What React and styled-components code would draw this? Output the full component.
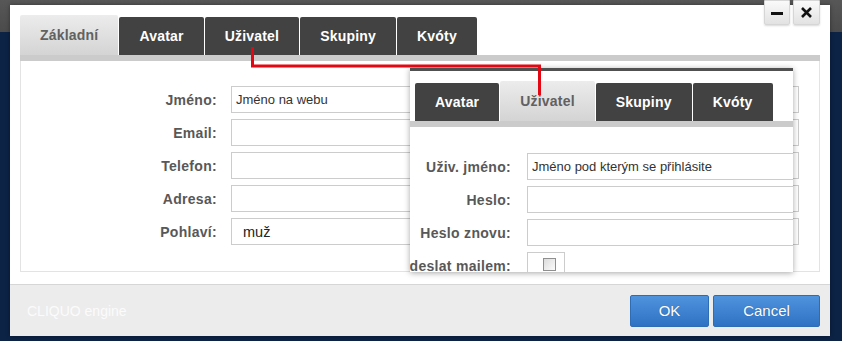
import React from 'react';
import styled, { createGlobalStyle, css } from 'styled-components';

const GlobalStyle = createGlobalStyle`
  html, body {
    margin: 0;
    padding: 0;
  }
  body {
    width: 842px;
    height: 341px;
    overflow: hidden;
    font-family: "Liberation Sans", Arial, sans-serif;
    background: linear-gradient(#575757 0, #4b4b4b 32px, #0c2346 32px);
  }
`;

const Page = styled.div`
  padding: 5px 0 0 10px;
`;

const Dialog = styled.div`
  position: relative;
  width: 820px;
  height: 331px;
  background: #ffffff;
  box-shadow: 0 0 4px rgba(0, 0, 0, 0.4);
  display: flex;
  flex-direction: column;
`;

const WindowButtons = styled.div`
  position: absolute;
  top: -5px;
  right: 10px;
  display: flex;
  gap: 3px;
`;

const WinButton = styled.button`
  width: ${p => p.w || 26}px;
  height: 25px;
  padding: 0;
  border: 1px solid #d6d6d6;
  border-radius: 0 0 2px 2px;
  background: linear-gradient(#fafafa, #e2e2e2);
  display: flex;
  align-items: center;
  justify-content: center;
  box-shadow: 0 1px 2px rgba(0, 0, 0, 0.15);

  svg {
    display: block;
  }
`;

const Body = styled.div`
  padding: 10px 10px 12px;
`;

const TabRow = styled.div`
  display: flex;
  align-items: flex-end;
  gap: 1px;
  height: 40px;
  padding-left: ${p => p.inset || 0}px;
  border-bottom: 6px solid #cbcbcb;
`;

const Tab = styled.div`
  height: 38px;
  padding: 0 20px;
  display: flex;
  align-items: center;
  font-size: 14px;
  font-weight: bold;
  letter-spacing: 0.2px;
  color: #ffffff;
  background: #424242;
  border-radius: 2px 2px 0 0;

  ${p => p.active && css`
    height: 40px;
    color: #616161;
    background: linear-gradient(#ececec, #d4d4d4);
  `}
`;

const Panel = styled.div`
  height: 211px;
  box-sizing: border-box;
  padding-top: 25px;
  border: 1px solid #e3e3e3;
  border-top: none;
`;

const Row = styled.div`
  display: flex;
  align-items: center;
  height: 27px;
  margin-bottom: 6px;
`;

const Label = styled.label`
  flex: none;
  width: ${p => p.w}px;
  margin-right: ${p => p.gap}px;
  display: flex;
  justify-content: flex-end;
  white-space: nowrap;
  font-size: 14px;
  font-weight: bold;
  letter-spacing: 0.3px;
  color: #585858;
`;

const Input = styled.input`
  flex: none;
  width: ${p => p.w}px;
  height: 27px;
  box-sizing: border-box;
  margin: 0;
  padding: 0 4px;
  border: 1px solid #cccccc;
  font-family: "Liberation Sans", Arial, sans-serif;
  font-size: 13px;
  color: #333333;
  background: #ffffff;
  outline: none;
`;

const SelectBox = styled.div`
  flex: none;
  width: ${p => p.w}px;
  height: 27px;
  box-sizing: border-box;
  padding-left: 11px;
  border: 1px solid #cccccc;
  display: flex;
  align-items: center;
  font-size: 14.5px;
  color: #222222;
`;

const CheckCell = styled.div`
  flex: none;
  align-self: flex-start;
  width: 38px;
  height: 27px;
  box-sizing: border-box;
  border: 1px solid #cccccc;
  padding: 5px 0 0 15px;
`;

const CheckBox = styled.span`
  display: block;
  width: 11px;
  height: 11px;
  border: 1px solid #8f8f8f;
  background: linear-gradient(135deg, #dcdcdc, #fbfbfb);
`;

const Footer = styled.div`
  flex: 1;
  display: flex;
  align-items: center;
  justify-content: space-between;
  padding: 0 10px 0 17px;
  border-top: 1px solid #d6d6d6;
  background: #ececec;
`;

const Brand = styled.span`
  font-size: 14px;
  color: #fbfbfb;
`;

const Actions = styled.div`
  display: flex;
  gap: 4px;
`;

const ActionButton = styled.button`
  width: ${p => p.w}px;
  height: 32px;
  border: 1px solid #2e6cb5;
  border-radius: 2px;
  background: linear-gradient(#4f93dd, #2f72c4);
  font-family: "Liberation Sans", Arial, sans-serif;
  font-size: 15px;
  color: #ffffff;
  text-shadow: 0 0 1px rgba(0, 0, 0, 0.35);
`;

const Callout = styled.div`
  position: absolute;
  left: 400px;
  top: 63px;
  width: 383px;
  height: 204px;
  box-sizing: border-box;
  padding-top: 10px;
  border-top: 3px solid #505050;
  background: #ffffff;
  box-shadow: 0 1px 6px rgba(0, 0, 0, 0.35);
  overflow: hidden;
`;

const CalloutBody = styled.div`
  padding-top: 26px;
`;

const Connector = styled.svg`
  position: absolute;
  left: 0;
  top: 0;
  pointer-events: none;
`;

const mainFields = [
  { label: 'Jméno:', value: 'Jméno na webu' },
  { label: 'Email:', value: '' },
  { label: 'Telefon:', value: '' },
  { label: 'Adresa:', value: '' },
];

const userFields = [
  { label: 'Uživ. jméno:', value: 'Jméno pod kterým se přihlásite' },
  { label: 'Heslo:', value: '' },
  { label: 'Heslo znovu:', value: '' },
];

const tabs = ['Avatar', 'Uživatel', 'Skupiny', 'Kvóty'];

const App = () => {
  return (
    <>
      <GlobalStyle />
      <Page>
        <Dialog>
          <WindowButtons>
            <WinButton w={26}>
              <svg width="12" height="20" viewBox="0 0 12 20">
                <rect x="0" y="9" width="12" height="3" fill="#111" />
              </svg>
            </WinButton>
            <WinButton w={27}>
              <svg width="11" height="11" viewBox="0 0 11 11">
                <path d="M1 1L10 10M10 1L1 10" stroke="#111" strokeWidth="2.6" />
              </svg>
            </WinButton>
          </WindowButtons>

          <Body>
            <TabRow>
              <Tab active>Základní</Tab>
              {tabs.map(t => <Tab key={t}>{t}</Tab>)}
            </TabRow>
            <Panel>
              {mainFields.map(f => (
                <Row key={f.label}>
                  <Label w={196} gap={14}>{f.label}</Label>
                  <Input w={568} defaultValue={f.value} readOnly />
                </Row>
              ))}
              <Row>
                <Label w={196} gap={14}>Pohlaví:</Label>
                <SelectBox w={568}>muž</SelectBox>
              </Row>
            </Panel>
          </Body>

          <Footer>
            <Brand>CLIQUO engine</Brand>
            <Actions>
              <ActionButton w={79}>OK</ActionButton>
              <ActionButton w={107}>Cancel</ActionButton>
            </Actions>
          </Footer>

          <Callout>
            <TabRow inset={5}>
              {tabs.map(t => <Tab key={t} active={t === 'Uživatel'}>{t}</Tab>)}
            </TabRow>
            <CalloutBody>
              {userFields.map(f => (
                <Row key={f.label}>
                  <Label w={101} gap={16}>{f.label}</Label>
                  <Input w={300} defaultValue={f.value} readOnly />
                </Row>
              ))}
              <Row>
                <Label w={101} gap={16}>Odeslat mailem:</Label>
                <CheckCell><CheckBox /></CheckCell>
              </Row>
            </CalloutBody>
          </Callout>

          <Connector width="820" height="331" viewBox="0 0 820 331">
            <path
              d="M242.5 42V61H529.5V90"
              fill="none"
              stroke="#e30613"
              strokeWidth="3"
            />
          </Connector>
        </Dialog>
      </Page>
    </>
  );
};

export default App;
